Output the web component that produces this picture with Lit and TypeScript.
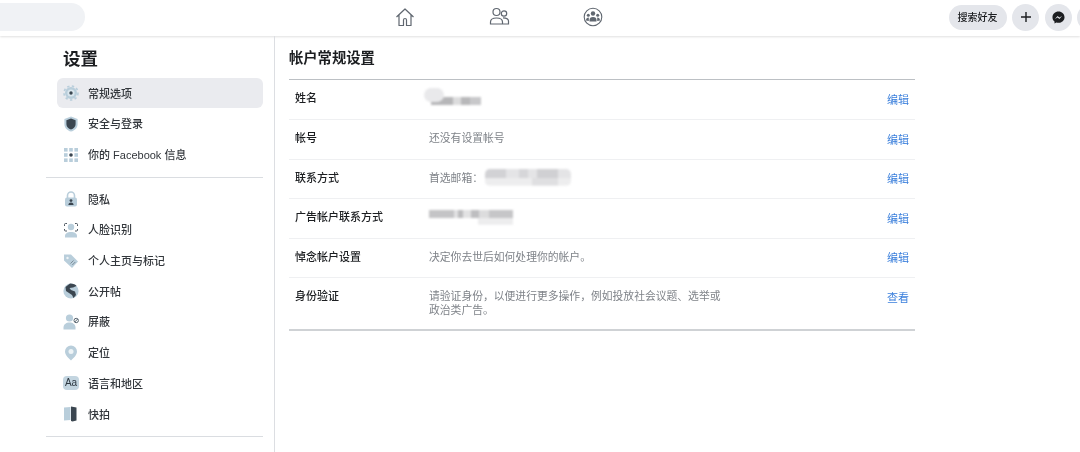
import { LitElement, html, css, svg } from "lit";
import { customElement } from "lit/decorators.js";

const L = "#b9cedb", D = "#3b4650", M = "#dbe7ee";
const icons: Record<string, unknown> = {
  gear: svg`<circle cx="8" cy="8" r="6" fill="${L}"/><circle cx="8" cy="8" r="7" fill="none" stroke="${L}" stroke-width="1.6" stroke-dasharray="2.4 2.4"/><circle cx="8" cy="8" r="3.6" fill="${M}"/><circle cx="8" cy="8" r="1.7" fill="${D}"/>`,
  shield: svg`<path d="M8 0.5 14.6 3v5c0 4-3 6.6-6.6 7.6C4.4 14.6 1.4 12 1.4 8V3Z" fill="${L}"/><path d="M8 2.6 12.6 4.2v3.8c0 2.8-2 4.8-4.6 5.6C5.4 12.8 3.4 10.8 3.4 8V4.2Z" fill="${D}"/>`,
  grid: svg`<g fill="${L}"><rect x="1" y="1" width="3.6" height="3.6"/><rect x="6.2" y="1" width="3.6" height="3.6"/><rect x="11.4" y="1" width="3.6" height="3.6"/><rect x="1" y="6.2" width="3.6" height="3.6"/><rect x="11.4" y="6.2" width="3.6" height="3.6"/><rect x="1" y="11.4" width="3.6" height="3.6"/><rect x="6.2" y="11.4" width="3.6" height="3.6"/><rect x="11.4" y="11.4" width="3.6" height="3.6"/></g><circle cx="8" cy="8" r="1.8" fill="${D}"/>`,
  lock: svg`<path d="M4.5 7V4.5a3.5 3.5 0 0 1 7 0V7" fill="none" stroke="${L}" stroke-width="1.6"/><rect x="2" y="6.5" width="12" height="9" rx="2" fill="${L}"/><circle cx="8" cy="9.6" r="1.4" fill="${D}"/><path d="M5.4 14a2.6 2.6 0 0 1 5.2 0Z" fill="${D}"/>`,
  face: svg`<path d="M1.5 4V2.5a1 1 0 0 1 1-1H4M12 1.500h1.500a1 1 0 0 1 1 1V4M1.500 7v1a1 1 0 0 0 1 1H4M12 9h1.500a1 1 0 0 0 1-1V7" fill="none" stroke="${D}" stroke-width=".9"/><circle cx="8" cy="5" r="3.200" fill="${L}"/><path d="M2 15.500v-1.500c0-2.500 2.500-4 6-4s6 1.500 6 4v1.500Z" fill="${L}"/>`,
  tag: svg`<path d="M1 1.500h7l7 7-6 6.500-8-7.500Z" fill="${L}"/><circle cx="4.500" cy="5" r="1.200" fill="#eef4f7"/><path d="M7.500 10.500l3-3M9.300 12l3-3" stroke="#6d7c88" stroke-width=".8"/>`,
  globe: svg`<circle cx="8" cy="8" r="7.600" fill="${L}"/><path d="M7 .5c3 0 6 1 6.500 2.500L10 4.500 6.500 5 8 7l4 1.500 1 3.500-2.500 3L9 12 6 10 3 8 2.500 4Z" fill="${D}"/>`,
  block: svg`<circle cx="6.500" cy="4" r="3.600" fill="${L}"/><path d="M.5 15.500v-2c0-3 2.500-5 6-5s6 2 6 5v2Z" fill="${L}"/><circle cx="13.200" cy="6.500" r="2.200" fill="none" stroke="#55626d" stroke-width="1"/><path d="M11.700 8l3-3" stroke="#55626d" stroke-width="1"/>`,
  pin: svg`<path d="M8 .5a6 6 0 0 1 6 6c0 3.600-3.500 6.500-6 9-2.500-2.500-6-5.400-6-9a6 6 0 0 1 6-6Z" fill="${L}"/><circle cx="8" cy="6.500" r="2.500" fill="#eef4f7"/>`,
  book: svg`<path d="M1 1.500 7.500 1v13l-6.500.5Z" fill="${L}"/><path d="M8 .5l5.500 1v13l-4 1-1.500-.5Z" fill="${D}"/>`,
};

interface Item { icon: string; label: string; active?: boolean }
const groupA: Item[] = [
  { icon: "gear", label: "常规选项", active: true },
  { icon: "shield", label: "安全与登录" },
  { icon: "grid", label: "你的 Facebook 信息" },
];
const groupB: Item[] = [
  { icon: "lock", label: "隐私" },
  { icon: "face", label: "人脸识别" },
  { icon: "tag", label: "个人主页与标记" },
  { icon: "globe", label: "公开帖" },
  { icon: "block", label: "屏蔽" },
  { icon: "pin", label: "定位" },
  { icon: "aa", label: "语言和地区" },
  { icon: "book", label: "快拍" },
];

@customElement("app-root")
export class AppRoot extends LitElement {
  static styles = css`
    :host {
      display: block;
      width: 1080px;
      height: 452px;
      overflow: hidden;
      background: #fff;
      font-family: "Liberation Sans", "Noto Sans CJK SC", sans-serif;
      color: #1c1e21;
    }
    .top {
      height: 36px;
      display: grid;
      grid-template-columns: 85px 1fr auto;
      align-items: center;
      box-shadow: 0 1px 2px rgba(0, 0, 0, 0.12);
      position: relative;
    }
    .search {
      height: 28px;
      margin-top: -2px;
      background: #f0f2f5;
      border-radius: 0 14px 14px 0;
    }
    .tabs {
      display: flex;
      gap: 70px;
      padding-left: 308px;
      margin-top: -3px;
    }
    .tabs svg { width: 24px; height: 24px; display: block; }
    .actions {
      display: flex;
      align-items: center;
      gap: 5.500px;
      margin-top: -2px;
      margin-right: -24px;
      filter: blur(0.3px);
    }
    .find {
      height: 25px;
      width: 58px;
      border-radius: 13px;
      background: #e4e6eb;
      font-size: 10px;
      font-weight: 500;
      line-height: 25px;
      text-align: center;
    }
    .round {
      width: 27px;
      height: 27px;
      border-radius: 50%;
      background: #e4e6eb;
      display: flex;
      align-items: center;
      justify-content: center;
    }
    .round svg { display: block; }
    .body { display: flex; height: 416px; }
    .side {
      width: 275px;
      box-sizing: border-box;
      padding: 0 11px 0 46px;
      border-right: 1px solid #dcdee2;
      flex: none;
    }
    h1 {
      margin: 10px 0 0 17px;
      font-size: 17.500px;
      line-height: 26px;
      font-weight: 700;
      color: #1c1e21;
    }
    .group { margin-left: 11px; margin-top: 6px; }
    .item {
      height: 30.700px;
      display: flex;
      align-items: center;
      padding-left: 6px;
      gap: 9px;
      font-size: 11px;
      font-weight: 500;
      color: #33373c;
      border-radius: 6px;
    }
    .item.active { background: #eaebef; height: 30px; margin-bottom: 0.5px; }
    .item span { position: relative; top: -0.5px; }
    .ico { width: 16px; height: 16px; display: block; flex: none; }
    .aa {
      width: 16px;
      height: 14px;
      flex: none;
      background: #c3d5e0;
      border-radius: 4px;
      font-size: 10px;
      line-height: 14px;
      text-align: center;
      color: #2d3740;
    }
    .rule { height: 1px; background: #dadde1; margin-top: 7px; }
    .main { padding-left: 14px; width: 626px; flex: none; }
    h2 {
      margin: 10px 0 0;
      font-size: 14.300px;
      line-height: 25px;
      height: 33px;
      font-weight: 700;
      color: #1c1e21;
    }
    .table { border-top: 1px solid #bcc0c4; border-bottom: 2px solid #cfd2d5; }
    .row {
      display: grid;
      grid-template-columns: 134px 1fr 28px;
      padding-left: 6px;
      min-height: 39.600px;
      font-size: 10.800px;
      line-height: 14px;
      padding-top: 11px;
      box-sizing: border-box;
      border-top: 1px solid #eff0f2;
    }
    .row:first-child { border-top: 0; min-height: 39px; }
    .row.tall { min-height: 52px; }
    .name { font-weight: 500; font-size: 11px; color: #1c1e21; }
    .val { color: #7f8389; max-width: 292px; display: flex; align-items: flex-start; }
    .edit { color: #3a7fdc; font-size: 11px; padding-top: 1.500px; }
    .blur { display: inline-block; position: relative; filter: blur(1px); }
    .b1 {
      width: 50px;
      height: 8px;
      margin: 6px 0 0 2px;
      background: linear-gradient(90deg, #b6b6b8 0 44%, #dcdcdd 44% 60%, #b8b8ba 60% 78%, #c8c8ca 78%);
    }
    .b1::before {
      content: "";
      position: absolute;
      left: -7px;
      top: -9px;
      width: 20px;
      height: 14px;
      border-radius: 7px;
      background: #e9e9eb;
    }
    .b2 {
      width: 86px;
      height: 17px;
      margin: -2px 0 0 2px;
      border-radius: 5px;
      background:
        linear-gradient(90deg, #d2d2d5 0 25%, #e4e4e6 25% 40%, #d6d6d9 40% 50%, #e4e4e6 50% 60%, #d0d0d3 60% 85%, #e4e4e6 85%) top / 100% 55% no-repeat,
        linear-gradient(90deg, #ededee 0 55%, #dfdfe1 55% 85%, #ededee 85%) bottom / 100% 45% no-repeat;
    }
    .b3 {
      width: 84px;
      height: 15px;
      margin: 0;
      background:
        linear-gradient(90deg, #c4c4c6 0 30%, #e2e2e3 30% 34%, #bcbcbe 34% 40%, #e2e2e3 40% 50%, #bebec0 50% 60%, #dcdcdd 60% 72%, #c6c6c8 72%) top / 100% 55% no-repeat,
        linear-gradient(90deg, #fff 0 58%, #ededee 58% 100%) bottom / 100% 45% no-repeat;
    }
    .soft { filter: blur(0.3px); }
  `;

  private row(it: Item) {
    return html`<div class="item ${it.active ? "active" : ""}">
      ${it.icon === "aa"
        ? html`<span class="aa">Aa</span>`
        : html`<svg class="ico" viewBox="0 0 16 16">${icons[it.icon]}</svg>`}
      <span>${it.label}</span>
    </div>`;
  }

  render() {
    const s = "#606770";
    return html`
      <div class="top">
        <div class="search"></div>
        <div class="tabs">
          <svg viewBox="0 0 24 24" fill="none" stroke="${s}" stroke-width="1.200" stroke-linejoin="round">
            <path d="M3.500 12 12 4l8.500 8M6 10v10.500h4.500V15a1.500 1.500 0 0 1 3 0v5.500H18V10"/>
          </svg>
          <svg viewBox="0 0 24 24" fill="none" stroke="${s}" stroke-width="1.200">
            <circle cx="9.500" cy="7" r="3.500"/><circle cx="17" cy="8.500" r="2.700"/>
            <path d="M3.500 19v-2c0-2.500 2.500-4 6-4s6 1.500 6 4v2ZM16 12.800c3 0 5.500 1 5.500 3.200V19h-6"/>
          </svg>
          <svg viewBox="0 0 24 24">
            <circle cx="12" cy="12" r="8.800" fill="#fff" stroke="${s}" stroke-width="1.100"/>
            <g fill="${s}">
              <circle cx="12" cy="8.500" r="2.200"/><circle cx="7.300" cy="10.300" r="1.500"/><circle cx="16.700" cy="10.300" r="1.500"/>
              <path d="M8.500 16.500v-1.500a3.500 3 0 0 1 7 0v1.500ZM5 15.500c0-1.800 1-3 2.800-3l0 3.500ZM19 15.500c0-1.800-1-3-2.800-3l0 3.500Z"/>
            </g>
          </svg>
        </div>
        <div class="actions">
          <div class="find">搜索好友</div>
          <div class="round">
            <svg width="12" height="12" viewBox="0 0 12 12"><path d="M6 1v10M1 6h10" stroke="#1c1e21" stroke-width="1.400"/></svg>
          </div>
          <div class="round">
            <svg width="13" height="13" viewBox="0 0 14 14">
              <path d="M7 .5C3.300.5.500 3.200.500 6.700c0 1.900.8 3.500 2.200 4.600v2.200l2-1.100c.7.200 1.500.3 2.300.3 3.700 0 6.500-2.700 6.500-6S10.700.5 7 .5Z" fill="#1c1e21"/>
              <path d="M3.200 8.600 6 5.300l2 1.600 2.800-1.500L8 8.600 6 7Z" fill="#e4e6eb"/>
            </svg>
          </div>
          <div class="round"></div>
        </div>
      </div>
      <div class="body">
        <div class="side soft">
          <h1>设置</h1>
          <div class="group">${groupA.map((i) => this.row(i))}</div>
          <div class="rule"></div>
          <div class="group">${groupB.map((i) => this.row(i))}</div>
          <div class="rule"></div>
        </div>
        <div class="main soft">
          <h2>帐户常规设置</h2>
          <div class="table">
            <div class="row"><div class="name">姓名</div><div class="val"><span class="blur b1"></span></div><div class="edit">编辑</div></div>
            <div class="row"><div class="name">帐号</div><div class="val">还没有设置帐号</div><div class="edit">编辑</div></div>
            <div class="row"><div class="name">联系方式</div><div class="val">首选邮箱：<span class="blur b2"></span></div><div class="edit">编辑</div></div>
            <div class="row"><div class="name">广告帐户联系方式</div><div class="val"><span class="blur b3"></span></div><div class="edit">编辑</div></div>
            <div class="row"><div class="name">悼念帐户设置</div><div class="val">决定你去世后如何处理你的帐户。</div><div class="edit">编辑</div></div>
            <div class="row tall"><div class="name">身份验证</div><div class="val">请验证身份，以便进行更多操作，例如投放社会议题、选举或政治类广告。</div><div class="edit">查看</div></div>
          </div>
        </div>
      </div>
    `;
  }
}
